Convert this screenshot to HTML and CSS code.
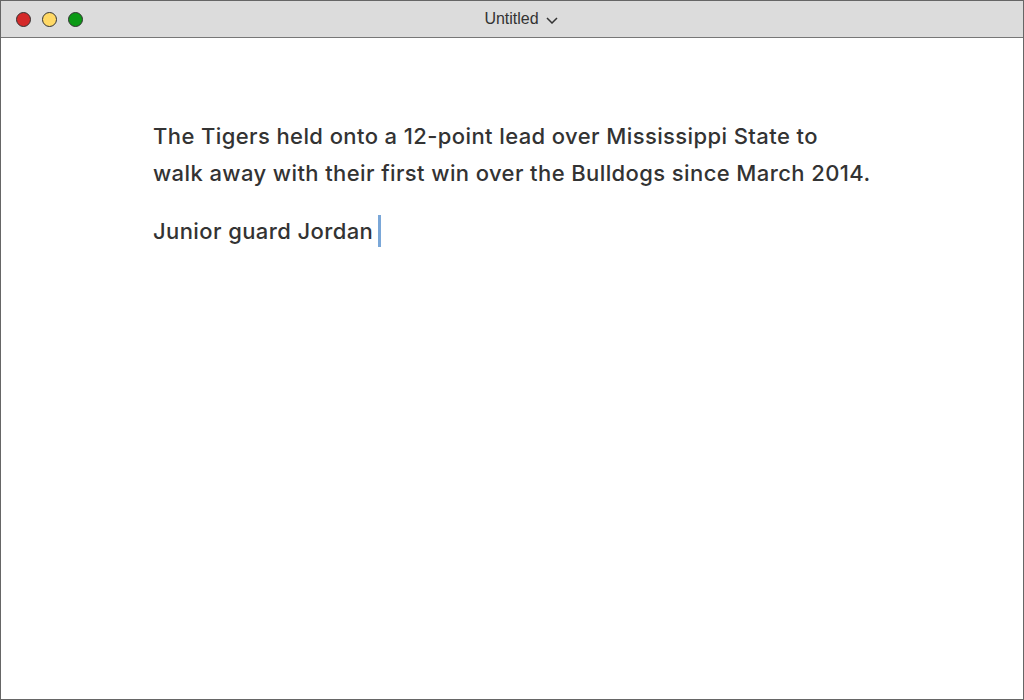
FILE: index.html
```html
<!DOCTYPE html>
<html>
<head>
<meta charset="utf-8">
<link rel="stylesheet" href="styles.css">
</head>
<body>
<div class="window">
  <header class="titlebar">
    <div class="lights">
      <span class="light red"></span>
      <span class="light yellow"></span>
      <span class="light green"></span>
    </div>
    <div class="title">Untitled <svg class="chev" width="12" height="7" viewBox="0 0 12 7"><path d="M1 1 L6 6 L11 1" fill="none" stroke="#333" stroke-width="1.5"/></svg></div>
  </header>
  <main class="doc">
    <p class="para">The Tigers held onto a 12-point lead over Mississippi State to walk away with their first win over the Bulldogs since March 2014.</p>
    <p class="para">Junior guard Jordan<span class="caret"></span></p>
  </main>
</div>
</body>
</html>
```
FILE: styles.css
```css
html, body { margin: 0; padding: 0; }
body { width: 1024px; height: 700px; overflow: hidden; background: #fff; }
.window {
  box-sizing: border-box;
  width: 1024px; height: 700px;
  border: 1px solid #666;
  display: flex; flex-direction: column;
}
.titlebar {
  height: 36px;
  flex: none;
  background: #dcdcdc;
  border-bottom: 1px solid #777;
  position: relative;
  display: flex; align-items: center; justify-content: center;
}
.lights {
  position: absolute; left: 15px; top: 11px;
  display: flex; gap: 11px;
}
.light {
  width: 15px; height: 15px; border-radius: 50%;
  box-sizing: border-box; border: 1px solid #333;
}
.red { background: #d42a2a; }
.yellow { background: #ffd966; }
.green { background: #0b9a15; }
.title {
  font-family: "Liberation Sans", Arial, sans-serif;
  font-size: 16px; color: #333;
  display: flex; align-items: center; gap: 7px;
  margin-left: 18px;
}
.chev { margin-top: 3px; }
.doc {
  flex: 1;
  padding: 80px 0 0 152px;
  width: 720px;
  font-family: "Inter", sans-serif;
  font-weight: 500;
  font-size: 22px;
  letter-spacing: 0.4px;
  color: #333;
  line-height: 37px;
}
.para { margin: 0 0 21px 0; }
.caret {
  display: inline-block;
  width: 3px; height: 32px;
  background: #7aa7d8;
  vertical-align: -8px;
  margin-left: 5px;
}
```
